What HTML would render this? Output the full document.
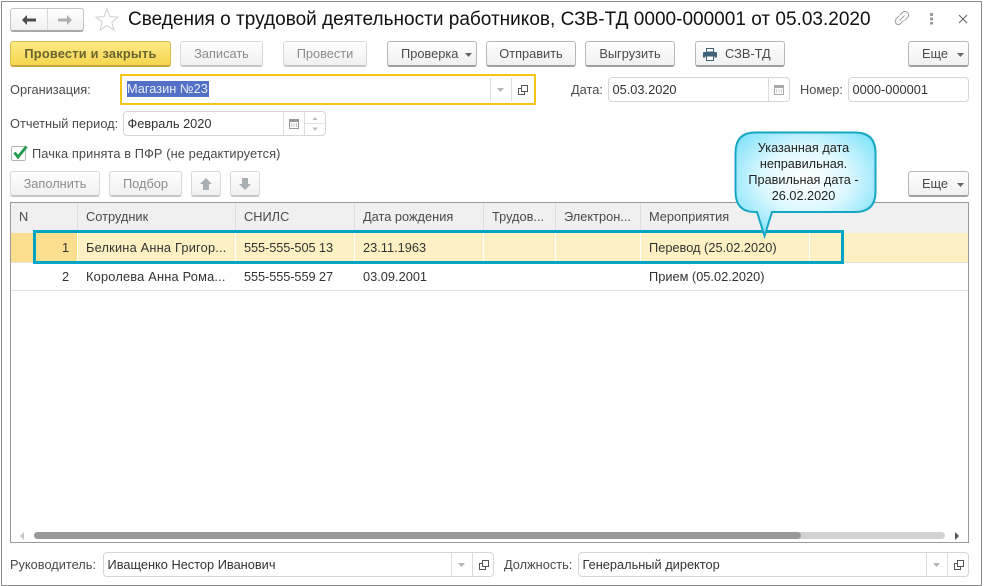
<!DOCTYPE html>
<html><head><meta charset="utf-8"><style>
html,body{margin:0;padding:0;background:#fff}
#p{position:relative;width:984px;height:586px;overflow:hidden;background:#fff;font:12.8px "Liberation Sans",sans-serif;color:#4a4a4a}
#p>*{position:absolute;box-sizing:border-box}
.t{white-space:nowrap;line-height:16px}
.b{height:26px;border:1px solid #b8b8b8;border-bottom:2px solid #a0a0a0;border-radius:3px;background:linear-gradient(#fff,#f0f0f0);text-align:center;line-height:24px;white-space:nowrap;color:#4a4a4a}
.d{border-color:#d8d8d8;border-bottom-color:#c8c8c8;color:#8c8c8c}
.f{border:1px solid #d6d6d6;border-radius:4px;background:#fff;color:#333;line-height:24px;padding-left:3.5px;white-space:nowrap;overflow:hidden}
.v{width:1px;background:#ddd}
.h{background:#dedede;width:1px;top:203px;height:30px}
.c{color:#333}
svg{display:block;overflow:visible}
</style></head><body><div id="p">
<div style="left:1px;top:1px;width:981px;height:2px;border-top:1px solid #8a8a8a"></div>
<div style="left:1px;top:1px;width:1px;height:584px;background:#8a8a8a"></div>
<div style="left:981px;top:1px;width:1px;height:584px;background:#8a8a8a"></div>
<div style="left:1px;top:585px;width:981px;height:1px;background:#8a8a8a"></div>

<div class="b" style="left:10px;top:8px;width:74px;height:24px;border-color:#c4c4c4;border-bottom-color:#a8a8a8"></div>
<div style="left:47px;top:9px;width:1px;height:21px;background:#d8d8d8"></div>
<svg style="left:22px;top:15px" width="14" height="10"><path d="M0 5 L5 0 V3.500 H14 V6.500 H5 V10 Z" fill="#4d4d4d"/></svg>
<svg style="left:58px;top:15px" width="14" height="10"><path d="M14 5 L9 0 V3.500 H0 V6.500 H9 V10 Z" fill="#aeaeae"/></svg>
<svg style="left:95px;top:8px" width="24" height="23"><path d="M12 1 L15 8.6 L23 9 L16.8 14.2 L19 22 L12 17.6 L5 22 L7.2 14.2 L1 9 L9 8.6 Z" fill="#fff" stroke="#d0d0d0" stroke-width="1"/></svg>
<div class="t" style="left:128px;top:9px;font-size:19px;line-height:22px;color:#111;letter-spacing:.012px">Сведения о трудовой деятельности работников, СЗВ-ТД 0000-000001 от 05.03.2020</div>
<svg style="left:894px;top:10px" width="16" height="16"><g fill="none" stroke="#9a9a9a" stroke-width=".9"><path d="M6 5 L9 2 Q11 0.5 13.5 2.5 Q15.5 5 14 7 L10.5 10.5"/><path d="M9.5 10.5 L6 14 Q4 15.5 2 13.5 Q0.5 11 2 9 L5.5 5.5"/><path d="M5.5 10.5 L10.5 5.5"/></g></svg>
<svg style="left:930px;top:13px" width="4" height="12"><g fill="#999"><rect x="0" y="0" width="3" height="3"/><rect x="0" y="4.5" width="3" height="3"/><rect x="0" y="9" width="3" height="2.5"/></g></svg>
<svg style="left:958px;top:14px" width="10" height="10"><path d="M1 1 L9 9 M9 1 L1 9" stroke="#666" stroke-width="1" fill="none"/></svg>

<div class="b" style="left:10px;top:41px;width:161px;border-color:#d6bc52;border-bottom-color:#c4a93f;background:linear-gradient(#fdeb85,#f6d64f);font-weight:bold;color:#6b6330;letter-spacing:.22px">Провести и закрыть</div>
<div class="b d" style="left:180px;top:41px;width:83px">Записать</div>
<div class="b d" style="left:283px;top:41px;width:84px">Провести</div>
<div class="b" style="left:387px;top:41px;width:90px;text-align:left;padding-left:13px">Проверка</div>
<svg style="left:465px;top:53px" width="7" height="4"><path d="M0 0H7L3.5 4Z" fill="#666"/></svg>
<div class="b" style="left:486px;top:41px;width:90px">Отправить</div>
<div class="b" style="left:585px;top:41px;width:90px">Выгрузить</div>
<div class="b" style="left:695px;top:41px;width:90px;text-align:left;padding-left:29px">СЗВ-ТД</div>
<svg style="left:703px;top:48px" width="14" height="13"><path d="M3.500 .5H10.500V4H3.500Z" fill="#fff" stroke="#41637a"/><path d="M1 4H13Q14 4 14 5V9.500H11.500V8H2.500V9.500H0V5Q0 4 1 4Z" fill="#41637a"/><rect x="3.500" y="8" width="7" height="4.500" fill="#fff" stroke="#41637a"/></svg>
<div class="b" style="left:908px;top:41px;width:61px;text-align:left;padding-left:13px">Еще</div>
<svg style="left:957px;top:53px" width="7" height="4"><path d="M0 0H7L3.5 4Z" fill="#666"/></svg>

<div class="t" style="left:10px;top:82px">Организация:</div>
<div style="left:120px;top:74px;width:416px;height:31px;border:2px solid #f6c617;background:#fff"></div>
<div class="t" style="left:127px;top:81px;height:16px;width:82px;background:#5470c6;color:#e8ecf8">Магазин №23</div>
<div class="v" style="left:490px;top:78px;height:23px"></div>
<div class="v" style="left:511px;top:78px;height:23px"></div>
<svg style="left:497px;top:88px" width="7" height="4"><path d="M0 0H7L3.5 4Z" fill="#b5b5b5"/></svg>
<svg style="left:518px;top:85px" width="10" height="10"><path d="M3.5 .5H9.5V6.5H3.5Z M3.5 3.5H.5V9.5H6.5V6.5" fill="none" stroke="#555"/></svg>

<div class="t" style="left:571px;top:82px">Дата:</div>
<div class="f" style="left:608px;top:77px;width:182px;height:25px">05.03.2020</div>
<div class="v" style="left:768px;top:78px;height:23px"></div>
<svg style="left:774px;top:84px" width="11" height="11"><rect x=".5" y="1.5" width="9" height="9" fill="#fff" stroke="#aaa"/><rect x="0" y="1" width="10" height="3" fill="#aaa"/><path d="M2 6H3M4.5 6H5.500M7 6H8M2 8H3M4.5 8H5.500M7 8H8" stroke="#999"/></svg>
<div class="t" style="left:800px;top:82px">Номер:</div>
<div class="f" style="left:848px;top:77px;width:121px;height:25px">0000-000001</div>

<div class="t" style="left:10px;top:116px">Отчетный период:</div>
<div class="f" style="left:123px;top:111px;width:203px;height:25px">Февраль 2020</div>
<div class="v" style="left:283px;top:112px;height:23px"></div>
<div class="v" style="left:304px;top:112px;height:23px"></div>
<svg style="left:289px;top:118px" width="11" height="11"><rect x=".5" y="1.5" width="9" height="9" fill="#fff" stroke="#999"/><rect x="0" y="1" width="10" height="3" fill="#999"/><path d="M2 6H3M4.5 6H5.500M7 6H8M2 8H3M4.5 8H5.500M7 8H8" stroke="#888"/></svg>
<svg style="left:312px;top:117px" width="6" height="14"><path d="M3 0L5.500 3H.5Z M3 14L5.500 10.500H.5Z" fill="#bbb"/></svg>
<div style="left:305px;top:123px;width:20px;height:1px;background:#e4e4e4"></div>

<div style="left:11px;top:146px;width:15px;height:15px;border:1px solid #b5b5b5;border-radius:2px;background:#fff"></div>
<svg style="left:13px;top:145px" width="15" height="14"><path d="M1.500 7.500L5 12L13.500 1.500" fill="none" stroke="#1f9a4c" stroke-width="2.800"/></svg>
<div class="t" style="left:32px;top:146px;letter-spacing:.1px">Пачка принята в ПФР (не редактируется)</div>

<div class="b d" style="left:10px;top:171px;width:90px">Заполнить</div>
<div class="b d" style="left:109px;top:171px;width:73px">Подбор</div>
<div class="b d" style="left:191px;top:171px;width:30px"></div>
<div class="b d" style="left:230px;top:171px;width:30px"></div>
<svg style="left:200px;top:178px" width="12" height="12"><path d="M6 0L12 6H9V12H3V6H0Z" fill="#a9b0b4"/></svg>
<svg style="left:239px;top:178px" width="12" height="12"><path d="M6 12L12 6H9V0H3V6H0Z" fill="#a9b0b4"/></svg>
<div class="b" style="left:908px;top:171px;width:61px;text-align:left;padding-left:13px">Еще</div>
<svg style="left:957px;top:183px" width="7" height="4"><path d="M0 0H7L3.5 4Z" fill="#666"/></svg>

<div style="left:10px;top:202px;width:959px;height:341px;border:1px solid #9a9a9a;background:#fff"></div>
<div style="left:11px;top:203px;width:957px;height:30px;background:#f0f0f0"></div>
<div class="h" style="left:77px"></div><div class="h" style="left:235px"></div><div class="h" style="left:354px"></div><div class="h" style="left:483px"></div><div class="h" style="left:555px"></div><div class="h" style="left:640px"></div>
<div class="t" style="left:19px;top:209px">N</div>
<div class="t" style="left:86px;top:209px">Сотрудник</div>
<div class="t" style="left:244px;top:209px">СНИЛС</div>
<div class="t" style="left:363px;top:209px">Дата рождения</div>
<div class="t" style="left:492px;top:209px">Трудов...</div>
<div class="t" style="left:564px;top:209px">Электрон...</div>
<div class="t" style="left:649px;top:209px">Мероприятия</div>

<div style="left:11px;top:233px;width:957px;height:29px;background:#fdf1c4"></div>
<div style="left:11px;top:233px;width:66px;height:29px;background:#fbdf8f"></div>
<div class="v" style="left:77px;top:233px;height:29px;background:#fff"></div>
<div class="v" style="left:235px;top:233px;height:29px;background:#fff"></div>
<div class="v" style="left:354px;top:233px;height:29px;background:#fff"></div>
<div class="v" style="left:483px;top:233px;height:29px;background:#fff"></div>
<div class="v" style="left:555px;top:233px;height:29px;background:#fff"></div>
<div class="v" style="left:640px;top:233px;height:29px;background:#fff"></div>
<div class="v" style="left:809px;top:233px;height:29px;background:#fff"></div>
<div style="left:11px;top:262px;width:957px;height:1px;background:#e2e2e2"></div>
<div style="left:11px;top:290px;width:957px;height:1px;background:#e2e2e2"></div>

<div class="t c" style="left:62px;top:240px">1</div>
<div class="t c" style="left:86px;top:240px;letter-spacing:.2px">Белкина Анна Григор...</div>
<div class="t c" style="left:244px;top:240px;letter-spacing:-.1px">555-555-505 13</div>
<div class="t c" style="left:363px;top:240px">23.11.1963</div>
<div class="t c" style="left:649px;top:240px">Перевод (25.02.2020)</div>
<div class="t c" style="left:62px;top:269px">2</div>
<div class="t c" style="left:86px;top:269px;letter-spacing:.2px">Королева Анна Рома...</div>
<div class="t c" style="left:244px;top:269px;letter-spacing:-.1px">555-555-559 27</div>
<div class="t c" style="left:363px;top:269px">03.09.2001</div>
<div class="t c" style="left:649px;top:269px">Прием (05.02.2020)</div>

<div style="left:33px;top:230px;width:811px;height:34px;border:3px solid #00a5c4"></div>

<svg style="left:734px;top:131px" width="144" height="108">
<defs><radialGradient id="g" cx="50%" cy="45%" r="62%"><stop offset="0" stop-color="#fff"/><stop offset=".5" stop-color="#dcf8ff"/><stop offset="1" stop-color="#80e2fa"/></radialGradient></defs>
<path d="M21 1.500H121Q141.500 1.500 141.500 22V60.500Q141.500 81 121 81H38L30.500 105L23 81H21Q1.500 81 1.500 60.500V22Q1.500 1.500 21 1.500Z" fill="url(#g)" stroke="#18a6c5" stroke-width="2"/>
</svg>
<div style="left:735px;top:140px;width:137px;text-align:center;line-height:16px;color:#222;font-size:12.700px">Указанная дата<br>неправильная.<br>Правильная дата -<br>26.02.2020</div>

<div style="left:34px;top:532px;width:911px;height:7px;border-radius:4px;background:#d2d2d2"></div>
<div style="left:34px;top:532px;width:767px;height:7px;border-radius:4px;background:#999"></div>
<svg style="left:20px;top:532px" width="5" height="8"><path d="M4 0V8L0 4Z" fill="#c8c8c8"/></svg>
<svg style="left:955px;top:532px" width="5" height="8"><path d="M0 0V8L4 4Z" fill="#555"/></svg>

<div class="t" style="left:10px;top:557px">Руководитель:</div>
<div class="f" style="left:103px;top:552px;width:391px;height:25px">Иващенко Нестор Иванович</div>
<div class="v" style="left:451px;top:553px;height:23px"></div>
<div class="v" style="left:472px;top:553px;height:23px"></div>
<svg style="left:458px;top:563px" width="7" height="4"><path d="M0 0H7L3.5 4Z" fill="#b5b5b5"/></svg>
<svg style="left:479px;top:560px" width="10" height="10"><path d="M3.5 .5H9.5V6.5H3.5Z M3.5 3.5H.5V9.5H6.5V6.5" fill="none" stroke="#555"/></svg>
<div class="t" style="left:504px;top:557px">Должность:</div>
<div class="f" style="left:578px;top:552px;width:391px;height:25px">Генеральный директор</div>
<div class="v" style="left:926px;top:553px;height:23px"></div>
<div class="v" style="left:947px;top:553px;height:23px"></div>
<svg style="left:933px;top:563px" width="7" height="4"><path d="M0 0H7L3.5 4Z" fill="#b5b5b5"/></svg>
<svg style="left:954px;top:560px" width="10" height="10"><path d="M3.5 .5H9.5V6.5H3.5Z M3.5 3.5H.5V9.5H6.5V6.5" fill="none" stroke="#555"/></svg>
</div></body></html>
